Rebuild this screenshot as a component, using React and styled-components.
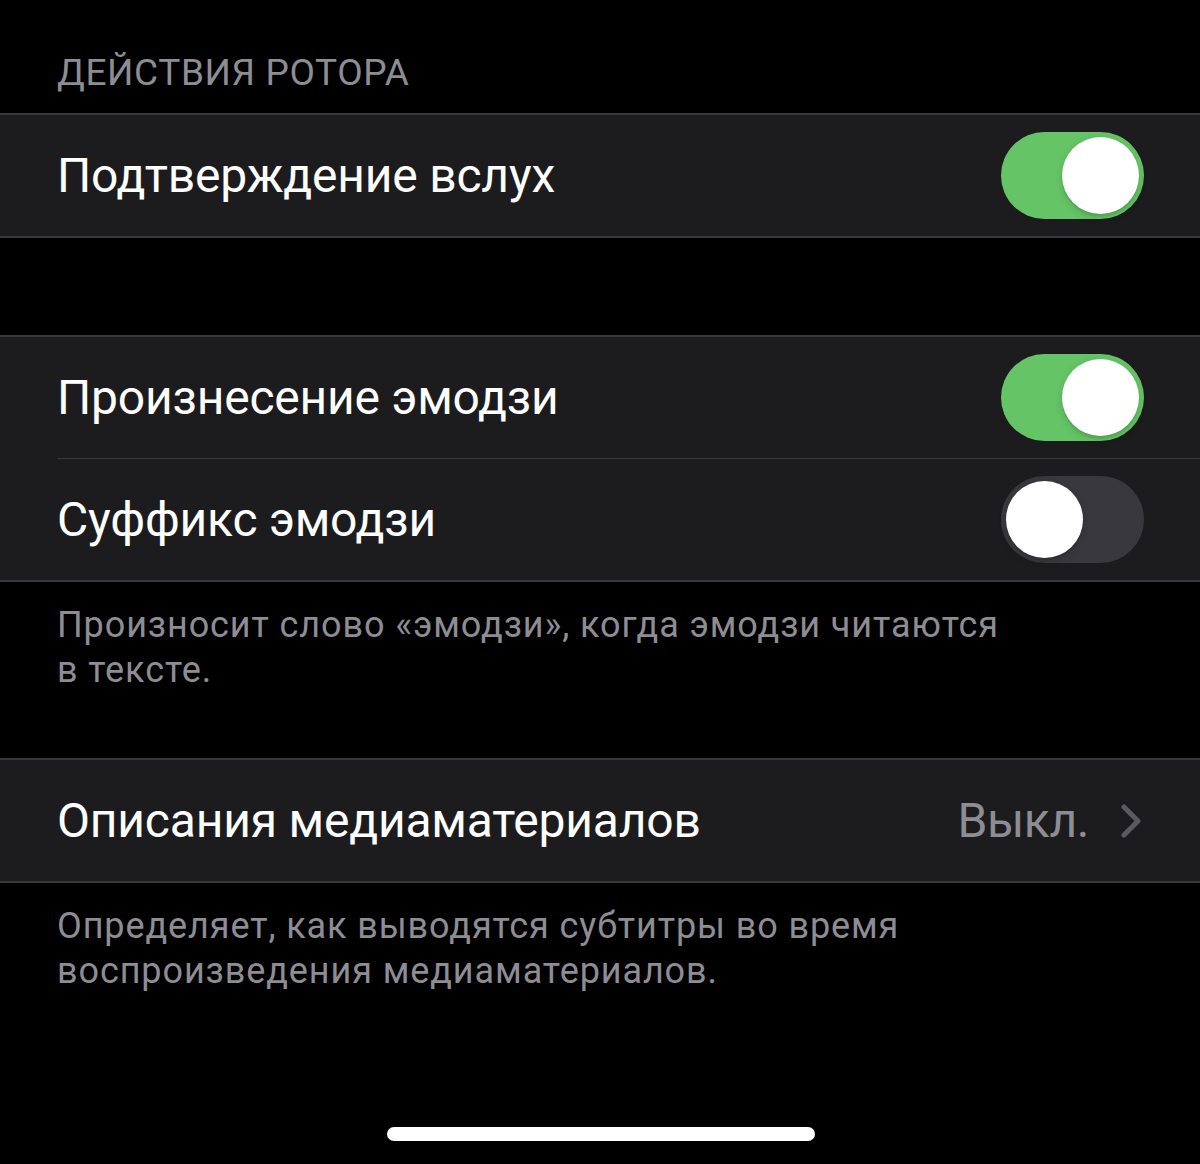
import React from "react";
import styled, { createGlobalStyle } from "styled-components";

const GlobalStyle = createGlobalStyle`
  html, body {
    margin: 0;
    padding: 0;
    background: #000;
  }
  body {
    font-family: Roboto, "Noto Sans", sans-serif;
    -webkit-font-smoothing: antialiased;
  }
`;

const Screen = styled.div`
  width: 1200px;
  height: 1164px;
  background: #000;
  display: flex;
  flex-direction: column;
  position: relative;
  overflow: hidden;
`;

const SectionHeader = styled.div`
  height: 113px;
  box-sizing: border-box;
  padding: 0 57px 19px;
  display: flex;
  align-items: flex-end;
  color: #8d8d93;
  font-size: 37px;
  line-height: 42px;
  letter-spacing: 0.6px;
`;

const Spacer = styled.div`
  height: ${(p) => p.$h}px;
`;

const Group = styled.div`
  background: #1c1c1e;
  border-top: 2px solid #38383a;
  border-bottom: 2px solid #38383a;
`;

const Row = styled.div`
  height: 121px;
  box-sizing: border-box;
  padding: 0 56px 0 57px;
  display: flex;
  align-items: center;
  justify-content: space-between;
`;

const Divider = styled.div`
  height: 1px;
  margin-left: 57px;
  background: #38383a;
`;

const Label = styled.span`
  color: #fff;
  font-size: 48px;
  letter-spacing: -0.2px;
`;

const Track = styled.div`
  width: 143px;
  height: 87px;
  border-radius: 44px;
  box-sizing: border-box;
  padding: 5px;
  display: flex;
  justify-content: ${(p) => (p.$on ? "flex-end" : "flex-start")};
  align-items: center;
  background: ${(p) => (p.$on ? "#65c466" : "#39393d")};
`;

const Knob = styled.div`
  width: 77px;
  height: 77px;
  border-radius: 50%;
  background: #fff;
  box-shadow: 0 3px 8px rgba(0, 0, 0, 0.15), 0 3px 1px rgba(0, 0, 0, 0.06);
`;

const Value = styled.div`
  display: flex;
  align-items: center;
  gap: 32px;
  color: #8d8d93;
  font-size: 48px;
  letter-spacing: -0.4px;
`;

const Footer = styled.div`
  padding: 21px 57px 0;
  color: #8d8d93;
  font-size: 36px;
  line-height: 45px;
  letter-spacing: 0.9px;
`;

const HomeBar = styled.div`
  position: absolute;
  left: 387px;
  top: 1127px;
  width: 428px;
  height: 14px;
  border-radius: 7px;
  background: #fff;
`;

function Toggle({ on }) {
  return (
    <Track $on={on}>
      <Knob />
    </Track>
  );
}

function Chevron() {
  return (
    <svg width="20" height="34" viewBox="0 0 20 34" style={{ marginRight: 3 }}>
      <path
        d="M3 3 L17 17 L3 31"
        fill="none"
        stroke="#5a5a5f"
        strokeWidth="5"
        strokeLinecap="round"
        strokeLinejoin="round"
      />
    </svg>
  );
}

export default function App() {
  return (
    <Screen>
      <GlobalStyle />
      <SectionHeader>ДЕЙСТВИЯ РОТОРА</SectionHeader>
      <Group>
        <Row>
          <Label>Подтверждение вслух</Label>
          <Toggle on />
        </Row>
      </Group>
      <Spacer $h={97} />
      <Group>
        <Row>
          <Label>Произнесение эмодзи</Label>
          <Toggle on />
        </Row>
        <Divider />
        <Row>
          <Label>Суффикс эмодзи</Label>
          <Toggle />
        </Row>
      </Group>
      <Footer>
        Произносит слово «эмодзи», когда эмодзи читаются
        <br />в тексте.
      </Footer>
      <Spacer $h={65} />
      <Group>
        <Row>
          <Label>Описания медиаматериалов</Label>
          <Value>
            Выкл.
            <Chevron />
          </Value>
        </Row>
      </Group>
      <Footer>
        Определяет, как выводятся субтитры во время
        <br />
        воспроизведения медиаматериалов.
      </Footer>
      <HomeBar />
    </Screen>
  );
}
